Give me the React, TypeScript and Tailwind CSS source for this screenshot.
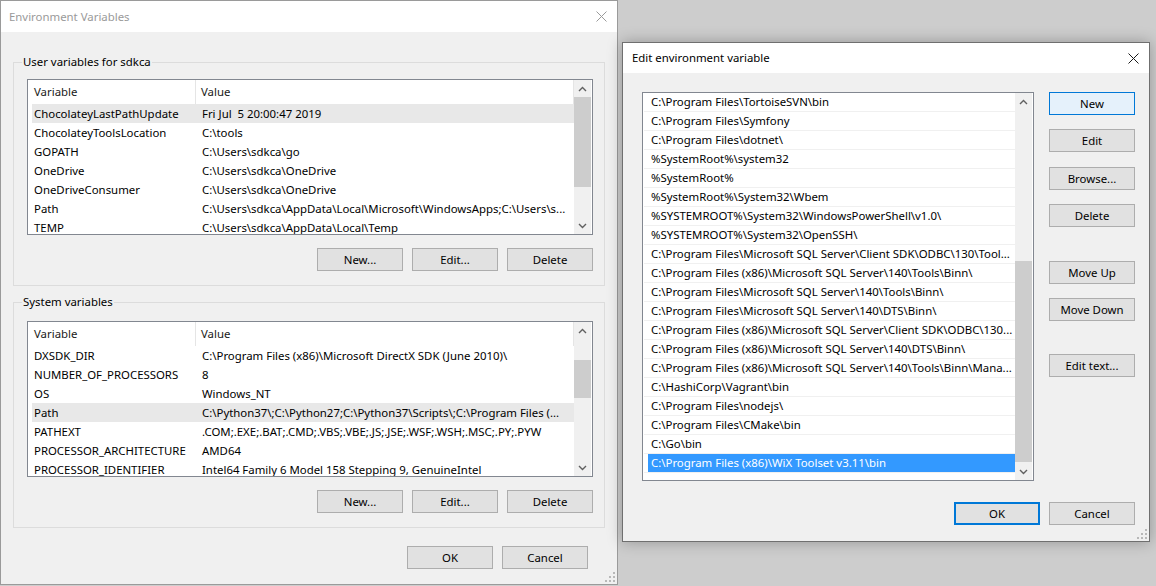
import React from 'react';

type Row = [string, string];

const userVars: Row[] = [
  ['ChocolateyLastPathUpdate', 'Fri Jul  5 20:00:47 2019'],
  ['ChocolateyToolsLocation', 'C:\\tools'],
  ['GOPATH', 'C:\\Users\\sdkca\\go'],
  ['OneDrive', 'C:\\Users\\sdkca\\OneDrive'],
  ['OneDriveConsumer', 'C:\\Users\\sdkca\\OneDrive'],
  ['Path', 'C:\\Users\\sdkca\\AppData\\Local\\Microsoft\\WindowsApps;C:\\Users\\s...'],
  ['TEMP', 'C:\\Users\\sdkca\\AppData\\Local\\Temp'],
];

const systemVars: Row[] = [
  ['DXSDK_DIR', 'C:\\Program Files (x86)\\Microsoft DirectX SDK (June 2010)\\'],
  ['NUMBER_OF_PROCESSORS', '8'],
  ['OS', 'Windows_NT'],
  ['Path', 'C:\\Python37\\;C:\\Python27;C:\\Python37\\Scripts\\;C:\\Program Files (...'],
  ['PATHEXT', '.COM;.EXE;.BAT;.CMD;.VBS;.VBE;.JS;.JSE;.WSF;.WSH;.MSC;.PY;.PYW'],
  ['PROCESSOR_ARCHITECTURE', 'AMD64'],
  ['PROCESSOR_IDENTIFIER', 'Intel64 Family 6 Model 158 Stepping 9, GenuineIntel'],
];

const pathEntries = [
  'C:\\Program Files\\TortoiseSVN\\bin',
  'C:\\Program Files\\Symfony',
  'C:\\Program Files\\dotnet\\',
  '%SystemRoot%\\system32',
  '%SystemRoot%',
  '%SystemRoot%\\System32\\Wbem',
  '%SYSTEMROOT%\\System32\\WindowsPowerShell\\v1.0\\',
  '%SYSTEMROOT%\\System32\\OpenSSH\\',
  'C:\\Program Files\\Microsoft SQL Server\\Client SDK\\ODBC\\130\\Tool...',
  'C:\\Program Files (x86)\\Microsoft SQL Server\\140\\Tools\\Binn\\',
  'C:\\Program Files\\Microsoft SQL Server\\140\\Tools\\Binn\\',
  'C:\\Program Files\\Microsoft SQL Server\\140\\DTS\\Binn\\',
  'C:\\Program Files (x86)\\Microsoft SQL Server\\Client SDK\\ODBC\\130...',
  'C:\\Program Files (x86)\\Microsoft SQL Server\\140\\DTS\\Binn\\',
  'C:\\Program Files (x86)\\Microsoft SQL Server\\140\\Tools\\Binn\\Mana...',
  'C:\\HashiCorp\\Vagrant\\bin',
  'C:\\Program Files\\nodejs\\',
  'C:\\Program Files\\CMake\\bin',
  'C:\\Go\\bin',
  'C:\\Program Files (x86)\\WiX Toolset v3.11\\bin',
];

const ChevronUp = () => (
  <svg width="9" height="6" viewBox="0 0 9 6">
    <path d="M1 5 L4.5 1.5 L8 5" fill="none" stroke="#606060" strokeWidth="1.4" />
  </svg>
);

const ChevronDown = () => (
  <svg width="9" height="6" viewBox="0 0 9 6">
    <path d="M1 1 L4.5 4.5 L8 1" fill="none" stroke="#606060" strokeWidth="1.4" />
  </svg>
);

const CloseX = ({ color }: { color: string }) => (
  <svg width="11" height="11" viewBox="0 0 11 11">
    <path d="M0.5 0.5 L10.5 10.5 M10.5 0.5 L0.5 10.5" stroke={color} strokeWidth="1" />
  </svg>
);

// little dotted resize grip in the window corner
const Grip = () => (
  <svg width="10" height="10" viewBox="0 0 10 10" className="absolute right-[2px] bottom-[2px]">
    {[[8, 0], [4, 4], [8, 4], [0, 8], [4, 8], [8, 8]].map(([x, y]) => (
      <rect key={`${x}-${y}`} x={x} y={y} width="2" height="2" fill="#b8b8b8" />
    ))}
  </svg>
);

function Scrollbar({ spacer, thumb }: { spacer: string; thumb: string }) {
  return (
    <div className="w-[17px] shrink-0 flex flex-col bg-[#f0f0f0]">
      <div className="h-[17px] shrink-0 flex items-center justify-center">
        <ChevronUp />
      </div>
      <div className="flex-1 flex flex-col">
        <div className={spacer} />
        <div className={thumb} />
      </div>
      <div className="h-[17px] shrink-0 flex items-center justify-center">
        <ChevronDown />
      </div>
    </div>
  );
}

function Btn({ children, variant = 'normal' }: { children: React.ReactNode; variant?: 'normal' | 'hot' | 'default' }) {
  const look =
    variant === 'hot'
      ? 'bg-[#e5f1fb] border border-[#0078d7]'
      : variant === 'default'
      ? 'bg-[#e1e1e1] border-2 border-[#0078d7]'
      : 'bg-[#e1e1e1] border border-[#adadad]';
  return (
    <button className={`w-[86px] h-[23px] shrink-0 flex items-center justify-center text-black leading-none ${look}`}>
      {children}
    </button>
  );
}

function VarList({ rows, selected, spacer, thumb }: { rows: Row[]; selected: number; spacer: string; thumb: string }) {
  return (
    <div className="h-[156px] border border-[#828790] bg-white flex pr-[1px]">
      <div className="flex-1 min-w-0 flex flex-col overflow-hidden">
        <div className="h-[24px] shrink-0 flex items-center">
          <div className="w-[168px] h-full pl-[6px] flex items-center border-r border-[#e5e5e5] text-[#1a1a1a]">Variable</div>
          <div className="flex-1 h-full pl-[5px] flex items-center border-r border-[#e5e5e5] text-[#1a1a1a]">Value</div>
        </div>
        <div className="pl-[4px] flex flex-col">
          {rows.map(([name, value], i) => (
            <div key={name + i} className={`h-[19px] shrink-0 flex items-center whitespace-pre ${i === selected ? 'bg-[#e8e8e8]' : ''}`}>
              <div className="w-[164px] pl-[2px] overflow-hidden">{name}</div>
              <div className="flex-1 min-w-0 pl-[6px] overflow-hidden">{value}</div>
            </div>
          ))}
        </div>
      </div>
      <Scrollbar spacer={spacer} thumb={thumb} />
    </div>
  );
}

function GroupBox({ title, className, children }: { title: string; className: string; children: React.ReactNode }) {
  return (
    <div className={`relative border border-[#dcdcdc] pl-[13px] pr-[11px] pb-[14px] ${className}`}>
      <div className="absolute left-[8px] top-[-9px] px-[1px] leading-[16px] bg-[#f0f0f0]">{title}</div>
      {children}
    </div>
  );
}

function EnvironmentVariables() {
  return (
    <div className="absolute left-0 top-0 w-[618px] h-[585px] border border-[#9a9a9a] bg-[#f0f0f0] flex flex-col">
      <div className="h-[31px] shrink-0 bg-white flex items-center justify-between pl-[8px] pr-[10px]">
        <span className="text-[#9a9a9a]">Environment Variables</span>
        <CloseX color="#9a9a9a" />
      </div>
      <div className="px-[12px]">
        <GroupBox title="User variables for sdkca" className="mt-[30px] pt-[16px]">
          <VarList rows={userVars} selected={0} spacer="h-0" thumb="h-[90px] bg-[#cdcdcd]" />
          <div className="flex justify-end gap-[9px] mt-[13px]">
            <Btn>New...</Btn>
            <Btn>Edit...</Btn>
            <Btn>Delete</Btn>
          </div>
        </GroupBox>
        <GroupBox title="System variables" className="mt-[16px] pt-[18px]">
          <VarList rows={systemVars} selected={3} spacer="h-[21px] shrink-0" thumb="h-[38px] bg-[#cdcdcd]" />
          <div className="flex justify-end gap-[9px] mt-[13px]">
            <Btn>New...</Btn>
            <Btn>Edit...</Btn>
            <Btn>Delete</Btn>
          </div>
        </GroupBox>
      </div>
      <div className="flex justify-end gap-[9px] mt-[18px] pr-[29px]">
        <Btn>OK</Btn>
        <Btn>Cancel</Btn>
      </div>
      <Grip />
    </div>
  );
}

function EditVariable() {
  const selected = pathEntries.length - 1;
  return (
    <div className="absolute left-[622px] top-[42px] w-[528px] h-[500px] border border-[#6f6f6f] bg-[#f0f0f0] flex flex-col shadow-[0_0_14px_rgba(0,0,0,0.28)]">
      <div className="h-[30px] shrink-0 bg-white flex items-center justify-between pl-[9px] pr-[10px]">
        <span className="text-black">Edit environment variable</span>
        <CloseX color="#1a1a1a" />
      </div>
      <div className="pl-[19px] pr-[14px] pt-[19px]">
        <div className="flex gap-[15px]">
          <div className="w-[392px] h-[389px] border border-[#828790] bg-white flex pr-[1px]">
            <div className="flex-1 min-w-0 flex flex-col pl-[1px] overflow-hidden">
              {pathEntries.map((p, i) => (
                <div key={p} className="h-[19px] shrink-0 flex border-b border-[#f0f0f0] whitespace-nowrap">
                  {i === selected ? (
                    <div className="flex-1 ml-[4px] pl-[3px] flex items-center bg-[#3399ff] text-white">{p}</div>
                  ) : (
                    <div className="flex-1 pl-[7px] flex items-center">{p}</div>
                  )}
                </div>
              ))}
            </div>
            <Scrollbar spacer="h-[151px] shrink-0" thumb="h-[201px] bg-[#cdcdcd]" />
          </div>
          <div className="flex flex-col w-[86px]">
            <Btn variant="hot">New</Btn>
            <div className="mt-[14px]"><Btn>Edit</Btn></div>
            <div className="mt-[15px]"><Btn>Browse...</Btn></div>
            <div className="mt-[14px]"><Btn>Delete</Btn></div>
            <div className="mt-[34px]"><Btn>Move Up</Btn></div>
            <div className="mt-[14px]"><Btn>Move Down</Btn></div>
            <div className="mt-[33px]"><Btn>Edit text...</Btn></div>
          </div>
        </div>
        <div className="flex justify-end gap-[9px] mt-[21px]">
          <Btn variant="default">OK</Btn>
          <Btn>Cancel</Btn>
        </div>
      </div>
      <Grip />
    </div>
  );
}

export default function App() {
  return (
    <div className="relative w-[1156px] h-[586px] overflow-hidden bg-[#cdcdcd] font-['Noto_Sans',sans-serif] text-[11.4px] text-black">
      <EnvironmentVariables />
      <EditVariable />
    </div>
  );
}
